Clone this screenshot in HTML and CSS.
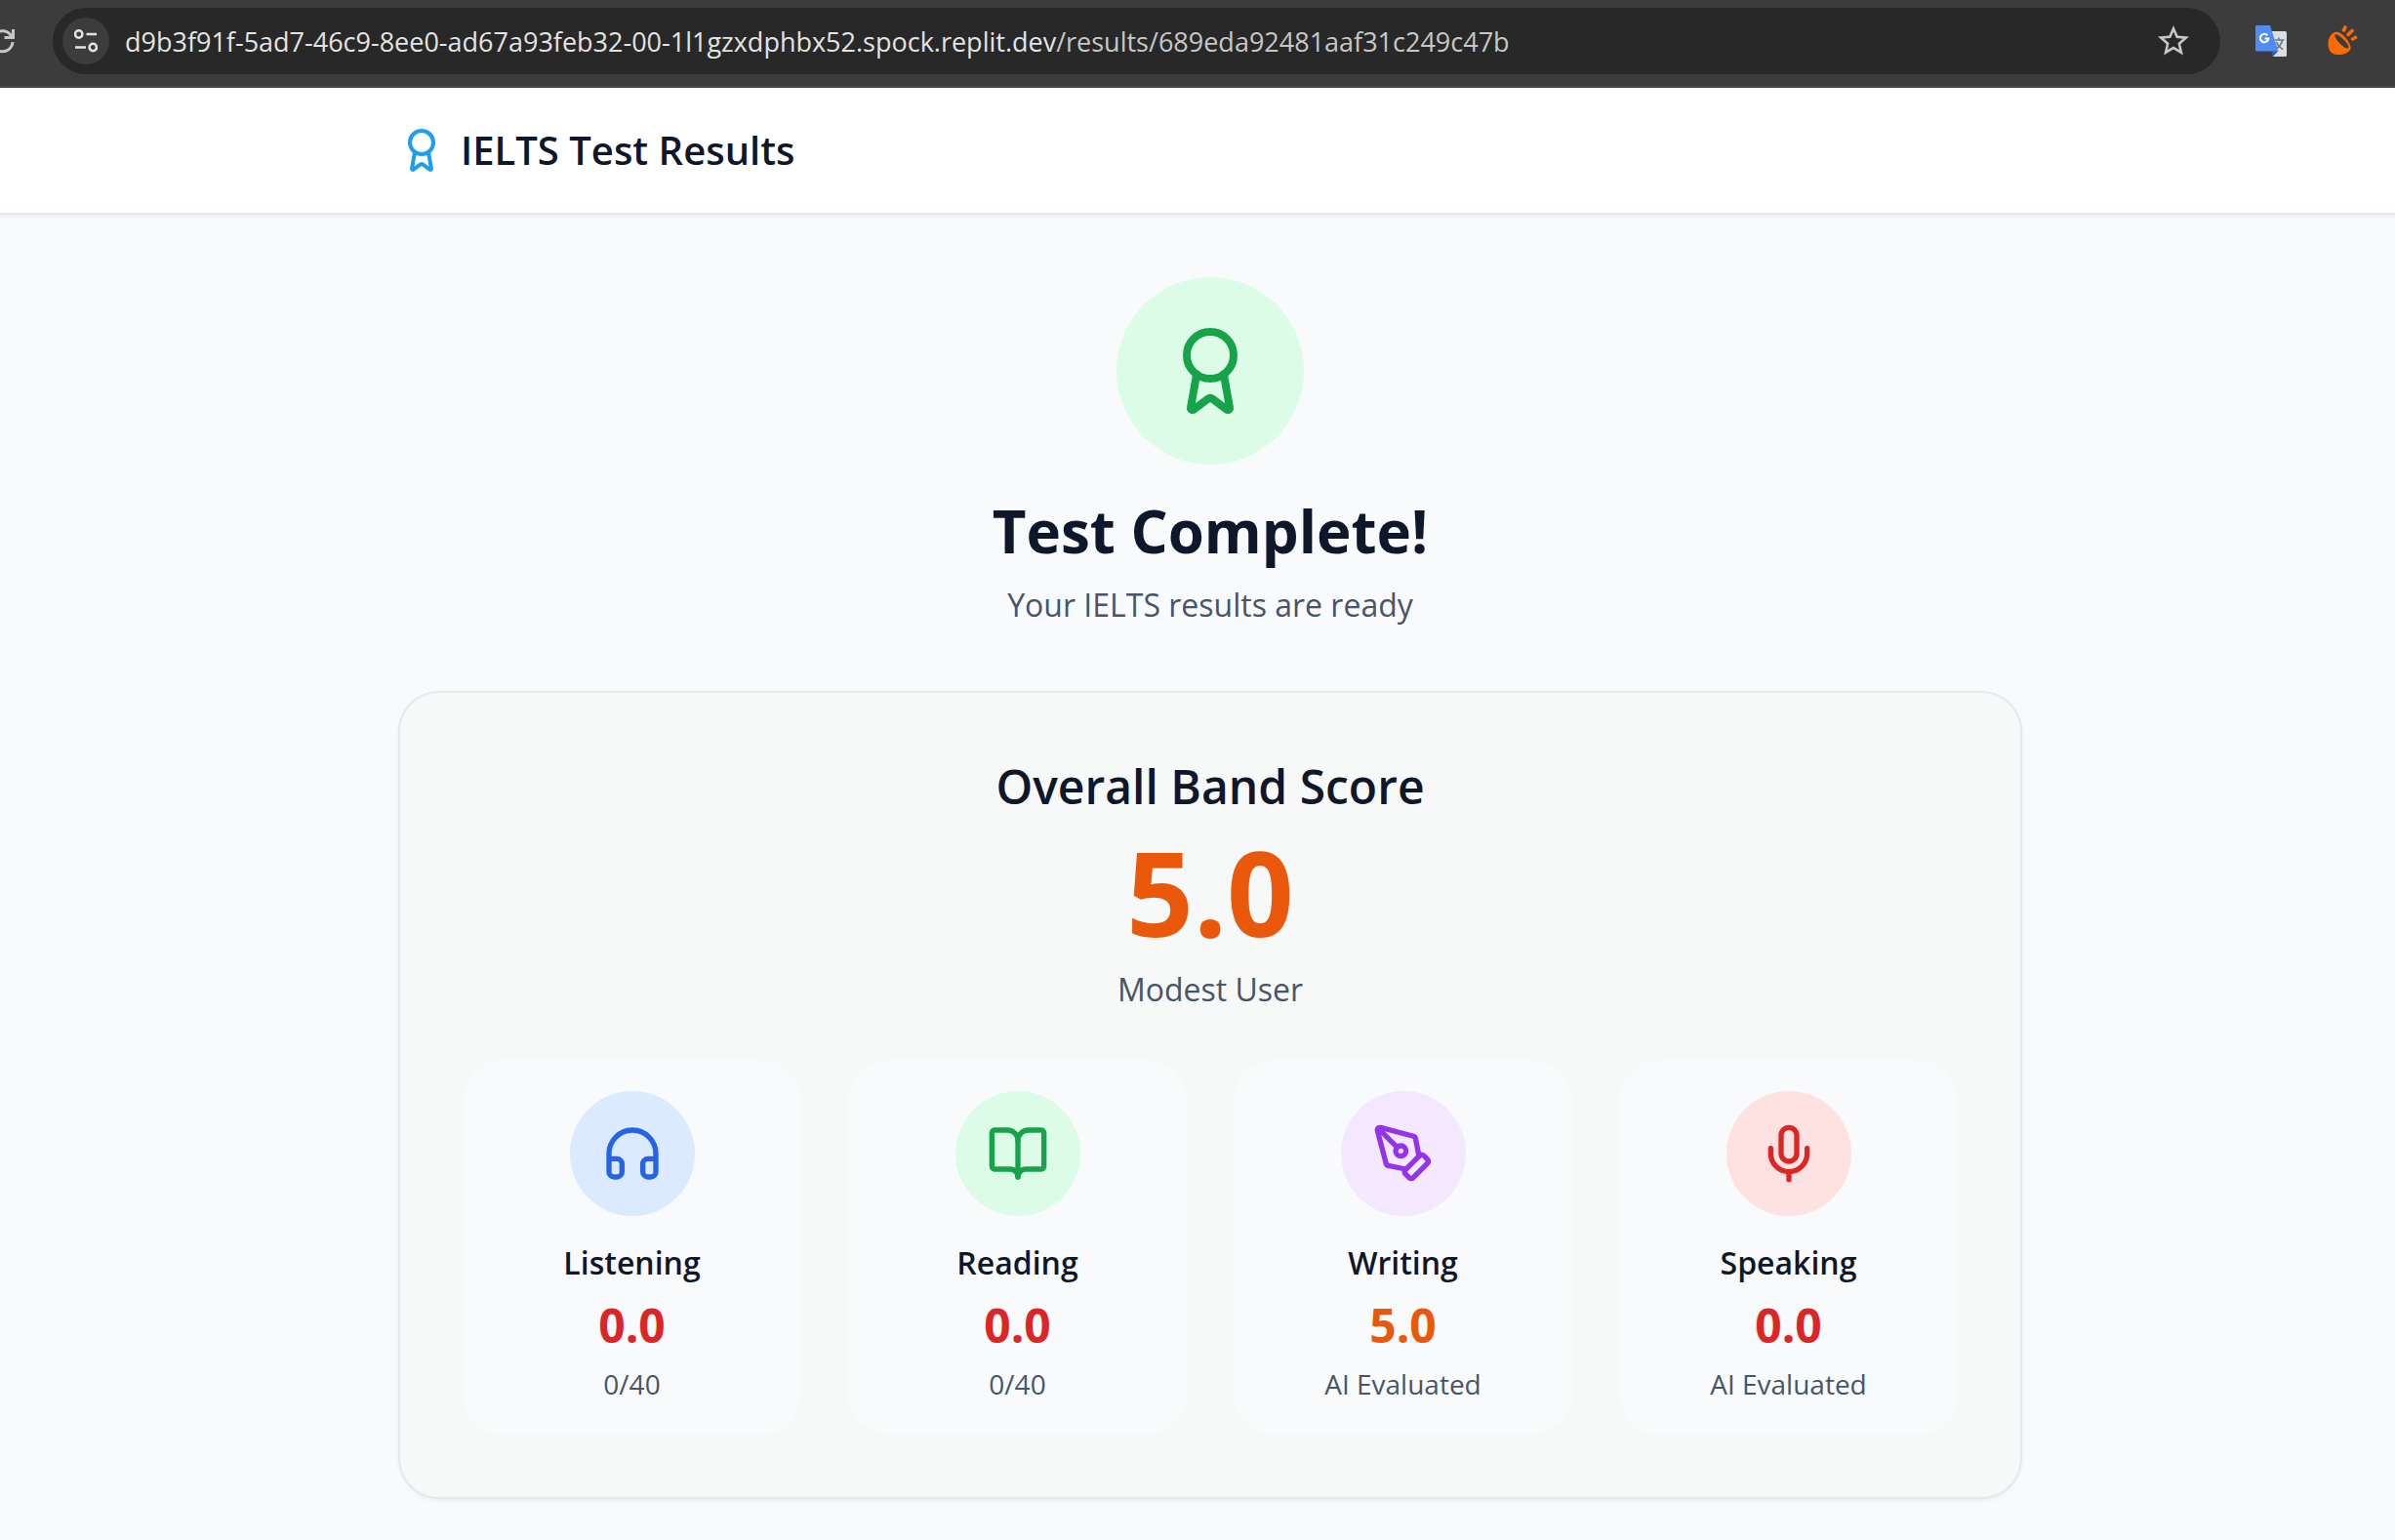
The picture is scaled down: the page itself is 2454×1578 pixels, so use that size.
FILE: index.html
```html
<!DOCTYPE html>
<html lang="en">
<head>
<meta charset="utf-8">
<meta name="viewport" content="width=device-width, initial-scale=1">
<title>IELTS Test Results</title>
<link rel="stylesheet" href="styles.css">
</head>
<body>
<svg class="sprite" aria-hidden="true">
  <symbol id="award" viewBox="0 0 24 24"><path d="m15.477 12.89 1.515 8.526a.5.5 0 0 1-.81.47l-3.58-2.687a1 1 0 0 0-1.197 0l-3.586 2.686a.5.5 0 0 1-.81-.469l1.514-8.526"/><circle cx="12" cy="8" r="6"/></symbol>
</svg>
<div class="browser-bar">
  <button class="tool reload" type="button" aria-label="Reload">
    <svg viewBox="0 0 32 32" width="32" height="32" fill="none" stroke="#c7c7c7" stroke-width="3"><path d="M25.600 11A10.500 10.500 0 1 0 27 17"/><path d="M27.500 4v8.500h-9"/></svg>
  </button>
  <div class="address">
    <button class="tool site-info" type="button" aria-label="View site information">
      <svg viewBox="0 0 24 24" width="24" height="24" fill="none" stroke="#e3e3e3" stroke-width="2.500"><circle cx="4.700" cy="5" r="3.700"/><path d="M12.500 5H23M1 18.500h11"/><circle cx="19.300" cy="18.500" r="3.700"/></svg>
    </button>
    <div class="url" role="textbox" aria-label="Address" contenteditable="true" spellcheck="false">d9b3f91f-5ad7-46c9-8ee0-ad67a93feb32-00-1l1gzxdphbx52.spock.replit.dev<span class="url-path">/results/689eda92481aaf31c249c47b</span></div>
    <button class="tool" type="button" aria-label="Bookmark this page">
      <svg viewBox="2 2 20 20" width="32" height="32" fill="#c7c7c7"><path d="M22 9.240l-7.190-.620L12 2 9.190 8.630 2 9.240l5.460 4.730L5.820 21 12 17.270 18.180 21l-1.630-7.030L22 9.240zM12 15.400l-3.760 2.270 1-4.280-3.320-2.880 4.380-.380L12 6.100l1.710 4.040 4.380.380-3.320 2.880 1 4.280L12 15.400z"/></svg>
    </button>
  </div>
  <div class="extensions">
    <button class="tool" type="button" aria-label="Translate">
      <svg viewBox="0 0 32 32" width="32" height="32"><path fill="#dedede" d="M14 6h16.500a1.500 1.500 0 0 1 1.500 1.500v23a1.500 1.500 0 0 1-1.500 1.500H18z"/><path fill="#3a4fc0" d="M16 26h7.500L18 32z"/><path fill="#4f8cf5" d="M1 0h14l8.500 26.500H1.500A1.500 1.500 0 0 1 0 25V1a1 1 0 0 1 1-1z"/><path fill="none" stroke="#fff" stroke-width="2.200" d="M12.300 10.200a4.200 4.200 0 1 0 1 3.300H9.500"/><path fill="none" stroke="#607d8b" stroke-width="1.600" d="M19.500 15h10M24 12.500V15M27.500 15c-.8 4-3.200 7-6 8.500M21.500 17c1 3 3.500 5.500 6.500 7.500"/></svg>
    </button>
    <button class="tool" type="button" aria-label="Extension">
      <svg viewBox="0 0 32 32" width="32" height="32"><path fill="#ff6a00" d="M9 7C4 8 1 14 1.500 20c.5 6 3.500 10 9.500 10 6 .5 12-2 13.500-6C26 19 15 5 9 7z"/><path fill="#3c3c3c" d="M8.500 9.500c3-1.500 14.500 9.500 14 13-1 2.500-5 0-8.500-3.500-3.500-3.500-6.500-8-5.500-9.500z"/><path stroke="#ff6a00" stroke-width="3.600" stroke-linecap="round" d="M17.500 5 19 2M22 9.500l4-4M26.500 14l3-1.500"/></svg>
    </button>
  </div>
</div>

<div class="page">
  <header class="site-header">
    <div class="container header-inner">
      <svg class="icon icon-sm brand" aria-hidden="true"><use href="#award"/></svg>
      <h1 class="site-title">IELTS Test Results</h1>
    </div>
  </header>

  <main class="container main">
    <section class="hero">
      <div class="badge badge-lg green"><svg class="icon icon-lg" aria-hidden="true"><use href="#award"/></svg></div>
      <h2 class="hero-title">Test Complete!</h2>
      <p class="lead">Your IELTS results are ready</p>
    </section>

    <section class="card">
      <h3 class="card-title">Overall Band Score</h3>
      <p class="band fair">5.0</p>
      <p class="lead">Modest User</p>

      <div class="skills">
        <article class="skill">
          <div class="badge blue"><svg class="icon" viewBox="0 0 24 24" aria-hidden="true"><path d="M3 14h3a2 2 0 0 1 2 2v3a2 2 0 0 1-2 2H5a2 2 0 0 1-2-2v-7a9 9 0 0 1 18 0v7a2 2 0 0 1-2 2h-1a2 2 0 0 1-2-2v-3a2 2 0 0 1 2-2h3"/></svg></div>
          <h4 class="skill-name">Listening</h4>
          <p class="skill-score low">0.0</p>
          <p class="skill-note">0/40</p>
        </article>
        <article class="skill">
          <div class="badge green"><svg class="icon" viewBox="0 0 24 24" aria-hidden="true"><path d="M12 7v14"/><path d="M3 18a1 1 0 0 1-1-1V4a1 1 0 0 1 1-1h5a4 4 0 0 1 4 4 4 4 0 0 1 4-4h5a1 1 0 0 1 1 1v13a1 1 0 0 1-1 1h-6a3 3 0 0 0-3 3 3 3 0 0 0-3-3z"/></svg></div>
          <h4 class="skill-name">Reading</h4>
          <p class="skill-score low">0.0</p>
          <p class="skill-note">0/40</p>
        </article>
        <article class="skill">
          <div class="badge purple"><svg class="icon" viewBox="0 0 24 24" aria-hidden="true"><path d="M15.707 21.293a1 1 0 0 1-1.414 0l-1.586-1.586a1 1 0 0 1 0-1.414l5.586-5.586a1 1 0 0 1 1.414 0l1.586 1.586a1 1 0 0 1 0 1.414z"/><path d="m18 13-1.375-6.874a1 1 0 0 0-.746-.776L3.235 2.028a1 1 0 0 0-1.207 1.207L5.350 15.879a1 1 0 0 0 .776.746L13 18"/><path d="m2.300 2.300 7.286 7.286"/><circle cx="11" cy="11" r="2"/></svg></div>
          <h4 class="skill-name">Writing</h4>
          <p class="skill-score fair">5.0</p>
          <p class="skill-note">AI Evaluated</p>
        </article>
        <article class="skill">
          <div class="badge red"><svg class="icon" viewBox="0 0 24 24" aria-hidden="true"><path d="M12 2a3 3 0 0 0-3 3v7a3 3 0 0 0 6 0V5a3 3 0 0 0-3-3Z"/><path d="M19 10v2a7 7 0 0 1-14 0v-2"/><path d="M12 19v3"/></svg></div>
          <h4 class="skill-name">Speaking</h4>
          <p class="skill-score low">0.0</p>
          <p class="skill-note">AI Evaluated</p>
        </article>
      </div>
    </section>
  </main>
</div>
</body>
</html>
```
FILE: styles.css
```css
* {
  box-sizing: border-box;
  margin: 0;
  padding: 0;
}

body {
  background: #f8fafc;
  color: #0f172a;
  font-family: "Open Sans", sans-serif;
  overflow-x: hidden;
}

.sprite {
  display: none;
}

/* Browser toolbar */
.browser-bar {
  display: flex;
  align-items: center;
  gap: 36px;
  padding: 8px 38px 12px 0;
  background: #3c3c3c;
  border-bottom: 2px solid #4a4748;
}

.tool {
  display: flex;
  flex: none;
  border: 0;
  background: none;
  cursor: pointer;
}

.reload {
  margin-left: -14px;
}

.extensions {
  display: flex;
  gap: 41px;
}

.address {
  display: flex;
  flex: 1;
  align-items: center;
  min-width: 0;
  height: 68px;
  padding: 0 32px 0 10px;
  border-radius: 34px;
  background: #282828;
}

.site-info {
  width: 48px;
  height: 48px;
  align-items: center;
  justify-content: center;
  border-radius: 50%;
  background: #3c3c3c;
}

.url {
  flex: 1;
  min-width: 0;
  margin-left: 16px;
  padding-top: 2px;
  overflow: hidden;
  color: #e3e3e3;
  font-size: 27px;
  line-height: 40px;
  white-space: nowrap;
  outline: 0;
}

.url-path {
  color: #c7c7c7;
}

/* Results page */
.page {
  margin-right: -26px;
}

.container {
  max-width: 1792px;
  margin: 0 auto;
  padding: 0 64px;
}

.site-header {
  background: #fff;
  border-bottom: 2px solid #e2e8f0;
  box-shadow: 0 2px 4px rgba(0, 0, 0, 0.05);
}

.header-inner {
  display: flex;
  align-items: center;
  gap: 16px;
  height: 128px;
}

.site-title {
  font-size: 40px;
  font-weight: 600;
  line-height: 56px;
}

.icon {
  width: 64px;
  height: 64px;
  fill: none;
  stroke: currentColor;
  stroke-width: 2;
  stroke-linecap: round;
  stroke-linejoin: round;
}

.icon-sm {
  width: 48px;
  height: 48px;
}

.icon-lg {
  width: 96px;
  height: 96px;
}

.brand {
  color: #1e9df1;
}

.main {
  padding-top: 64px;
  padding-bottom: 40px;
  text-align: center;
}

.hero {
  margin-bottom: 64px;
}

.badge {
  display: flex;
  align-items: center;
  justify-content: center;
  width: 128px;
  height: 128px;
  margin: 0 auto 24px;
  border-radius: 50%;
}

.badge-lg {
  width: 192px;
  height: 192px;
  margin-bottom: 32px;
}

.blue {
  background: #dbeafe;
  color: #2563eb;
}

.green {
  background: #dcfce7;
  color: #16a34a;
}

.purple {
  background: #f3e8ff;
  color: #9333ea;
}

.red {
  background: #fee2e2;
  color: #dc2626;
}

.hero-title {
  margin-bottom: 16px;
  font-size: 60px;
  font-weight: 700;
  line-height: 72px;
}

.lead {
  color: #475569;
  font-size: 32px;
  line-height: 48px;
}

.card {
  padding: 64px;
  border: 2px solid #e1eaef;
  border-radius: 42px;
  background: #f7f8f8;
  box-shadow: 0 2px 4px rgba(0, 0, 0, 0.05);
}

.card-title {
  margin-bottom: 16px;
  font-size: 48px;
  font-weight: 600;
  line-height: 64px;
}

.band {
  margin-bottom: 16px;
  font-size: 120px;
  font-weight: 700;
  line-height: 120px;
}

.fair {
  color: #ea580c;
}

.low {
  color: #dc2626;
}

.skills {
  display: grid;
  grid-template-columns: repeat(4, 1fr);
  gap: 48px;
  margin-top: 48px;
}

.skill {
  padding: 32px;
  border-radius: 42px;
  background: #f8fafc;
}

.skill-name {
  margin-bottom: 8px;
  font-size: 32px;
  font-weight: 600;
  line-height: 48px;
}

.skill-score {
  margin-bottom: 8px;
  font-size: 48px;
  font-weight: 700;
  line-height: 64px;
}

.skill-note {
  color: #475569;
  font-size: 28px;
  line-height: 40px;
}
```
